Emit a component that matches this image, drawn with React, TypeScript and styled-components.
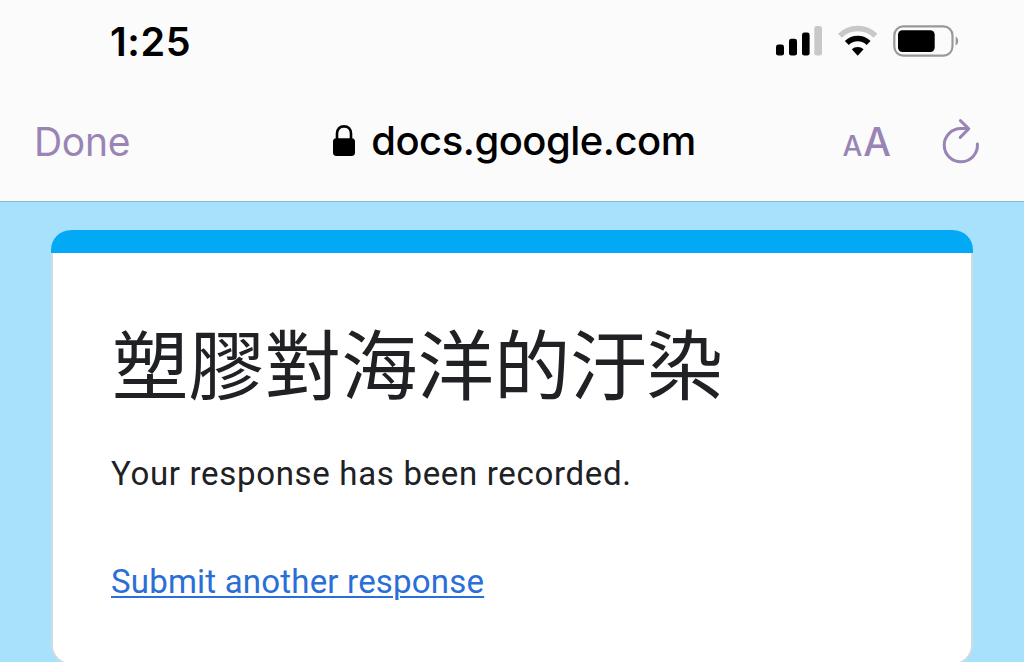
import React from "react";
import styled, {createGlobalStyle} from "styled-components";

const accent = "#9985b5";

const SignalIcon = () => (
  <svg width="48" height="32" viewBox="0 0 48 32">
    <rect x="1" y="19.6" width="8" height="11" rx="2.4" fill="#000" />
    <rect x="14" y="13.8" width="8" height="16.8" rx="2.4" fill="#000" />
    <rect x="27" y="7.6" width="7.6" height="23" rx="2.4" fill="#000" />
    <rect x="39.3" y="1" width="7.7" height="29.6" rx="2.4" fill="#c8c8c8" />
  </svg>
);

const WifiIcon = () => (
  <svg width="40" height="32" viewBox="0 0 40 32">
    <path d="M1.9 10.8a25.4 25.4 0 0 1 35.6 0" fill="none" stroke="#c8c8c8" strokeWidth="5.6" />
    <path d="M8.8 18a15.6 15.6 0 0 1 21.8 0" fill="none" stroke="#000" strokeWidth="5.6" />
    <path d="M13.8 24.3a8.4 8.4 0 0 1 11.8 0L19.7 30.8Z" fill="#000" />
  </svg>
);

const BatteryIcon = () => (
  <svg width="68" height="32" viewBox="0 0 68 32">
    <rect x="1.3" y="1.4" width="58.2" height="29.2" rx="9" fill="none" stroke="#999" strokeWidth="2.2" />
    <rect x="5" y="5.2" width="36.7" height="21.8" rx="4.4" fill="#000" />
    <path d="M62.6 11.5c3.4 1.4 3.4 7.6 0 9Z" fill="#999" />
  </svg>
);

const LockIcon = () => (
  <svg width="24" height="34" viewBox="0 0 24 34">
    <path d="M5 15V9.6C5 4.8 8 2.4 12 2.4s7 2.4 7 7.2V15" fill="none" stroke="#000" strokeWidth="2.6" />
    <rect x="1" y="14.2" width="22" height="17.8" rx="3.4" fill="#000" />
  </svg>
);

const ReloadIcon = () => (
  <svg width="38" height="46" viewBox="0 0 38 46">
    <path
      d="M35.4 26A16.6 16.6 0 1 1 18.8 10.6H26.4M18.4 2.6L26.8 10.8L18.2 19.4"
      fill="none"
      stroke={accent}
      strokeWidth="3"
      strokeLinecap="round"
      strokeLinejoin="round"
    />
  </svg>
);

const App = () => (
  <StyledPage>
    <GlobalStyle />
    <StyledBrowserHeader>
      <StyledStatusBar>
        <StyledTime>1:25</StyledTime>
        <StyledStatusIcons>
          <SignalIcon />
          <WifiIcon />
          <BatteryIcon />
        </StyledStatusIcons>
      </StyledStatusBar>
      <StyledToolbar>
        <StyledDone>Done</StyledDone>
        <StyledAddress>
          <LockIcon />
          <span>docs.google.com</span>
        </StyledAddress>
        <StyledActions>
          <StyledTextSize aria-label="Text size">
            <StyledLetter size={28}>A</StyledLetter>
            <StyledLetter size={39}>A</StyledLetter>
          </StyledTextSize>
          <StyledReload aria-label="Reload">
            <ReloadIcon />
          </StyledReload>
        </StyledActions>
      </StyledToolbar>
    </StyledBrowserHeader>
    <StyledForm>
      <StyledCard>
        <StyledTitle>塑膠對海洋的汙染</StyledTitle>
        <StyledMessage>Your response has been recorded.</StyledMessage>
        <StyledLink href="#">Submit another response</StyledLink>
      </StyledCard>
    </StyledForm>
  </StyledPage>
);

export default App;

const GlobalStyle = createGlobalStyle`
  * {
    box-sizing: border-box;
  }

  body {
    margin: 0;
    overflow: hidden;
  }

  svg {
    display: block;
    flex: none;
  }
`;

const StyledPage = styled.div`
  display: flex;
  flex-direction: column;
  width: 1024px;
  height: 662px;
  overflow: hidden;
  background: #a8e1fc;
`;

const StyledBrowserHeader = styled.header`
  flex: none;
  height: 202px;
  background: #fbfbfb;
  border-bottom: 1px solid #8fb9cb;
  font-family: Inter, "Liberation Sans", sans-serif;
`;

const StyledStatusBar = styled.div`
  display: flex;
  justify-content: space-between;
  align-items: center;
  height: 82px;
  padding: 0 63px 0 110px;
`;

const StyledTime = styled.div`
  padding-top: 2px;
  font-size: 39.5px;
  font-weight: 600;
  line-height: 48px;
  letter-spacing: 0.6px;
`;

const StyledStatusIcons = styled.div`
  display: flex;
  gap: 15px;
`;

const StyledToolbar = styled.div`
  display: grid;
  grid-template-columns: 1fr auto 1fr;
  align-items: center;
  height: 118px;
  padding: 0 34px;
`;

const StyledButton = styled.button`
  padding: 0;
  border: 0;
  background: none;
  color: ${accent};
  font-family: inherit;
`;

const StyledDone = styled(StyledButton)`
  justify-self: start;
  font-size: 39px;
  letter-spacing: -0.3px;
`;

const StyledAddress = styled.div`
  display: flex;
  align-items: center;
  gap: 15px;
  margin-left: 4px;
  padding-bottom: 1px;
  font-size: 40px;
  font-weight: 550;
  letter-spacing: -0.5px;
`;

const StyledActions = styled.div`
  display: flex;
  justify-content: flex-end;
  align-items: center;
  gap: 51px;
  padding-right: 10px;
`;

const StyledTextSize = styled(StyledButton)`
  display: flex;
  align-items: baseline;
  gap: 1px;
  font-weight: 450;
`;

const StyledLetter = styled.span<{size: number}>`
  font-size: ${(x) => x.size}px;
`;

const StyledReload = styled(StyledButton)`
  padding-bottom: 1px;
`;

const StyledForm = styled.main`
  flex: none;
  padding: 28px 51px 0;
`;

const StyledCard = styled.section`
  display: flex;
  flex-direction: column;
  align-items: flex-start;
  height: 435px;
  padding: 0 58px;
  border: 2px solid #cfdce3;
  border-top: 0;
  border-radius: 20px;
  background: #fff;
  font-family: Roboto, "Noto Sans CJK TC", sans-serif;
  color: #202124;

  &::before {
    content: "";
    align-self: stretch;
    flex: none;
    height: 23px;
    margin: 0 -60px;
    border-radius: 20px 20px 0 0;
    background: #03a9f4;
  }
`;

const StyledTitle = styled.h1`
  margin: 58px 0 0 1px;
  font-family: "Noto Sans CJK TC", sans-serif;
  font-size: 76.4px;
  font-weight: 400;
  line-height: 100px;
  white-space: nowrap;
`;

const StyledMessage = styled.p`
  margin: 39px 0 0;
  font-size: 33px;
  line-height: 48px;
  letter-spacing: 0.68px;
`;

const StyledLink = styled.a`
  margin-top: 60px;
  color: #2a6fd6;
  font-size: 33px;
  line-height: 48px;
  letter-spacing: 0.2px;
  text-decoration-thickness: 2px;
  text-underline-offset: 3px;
`;
